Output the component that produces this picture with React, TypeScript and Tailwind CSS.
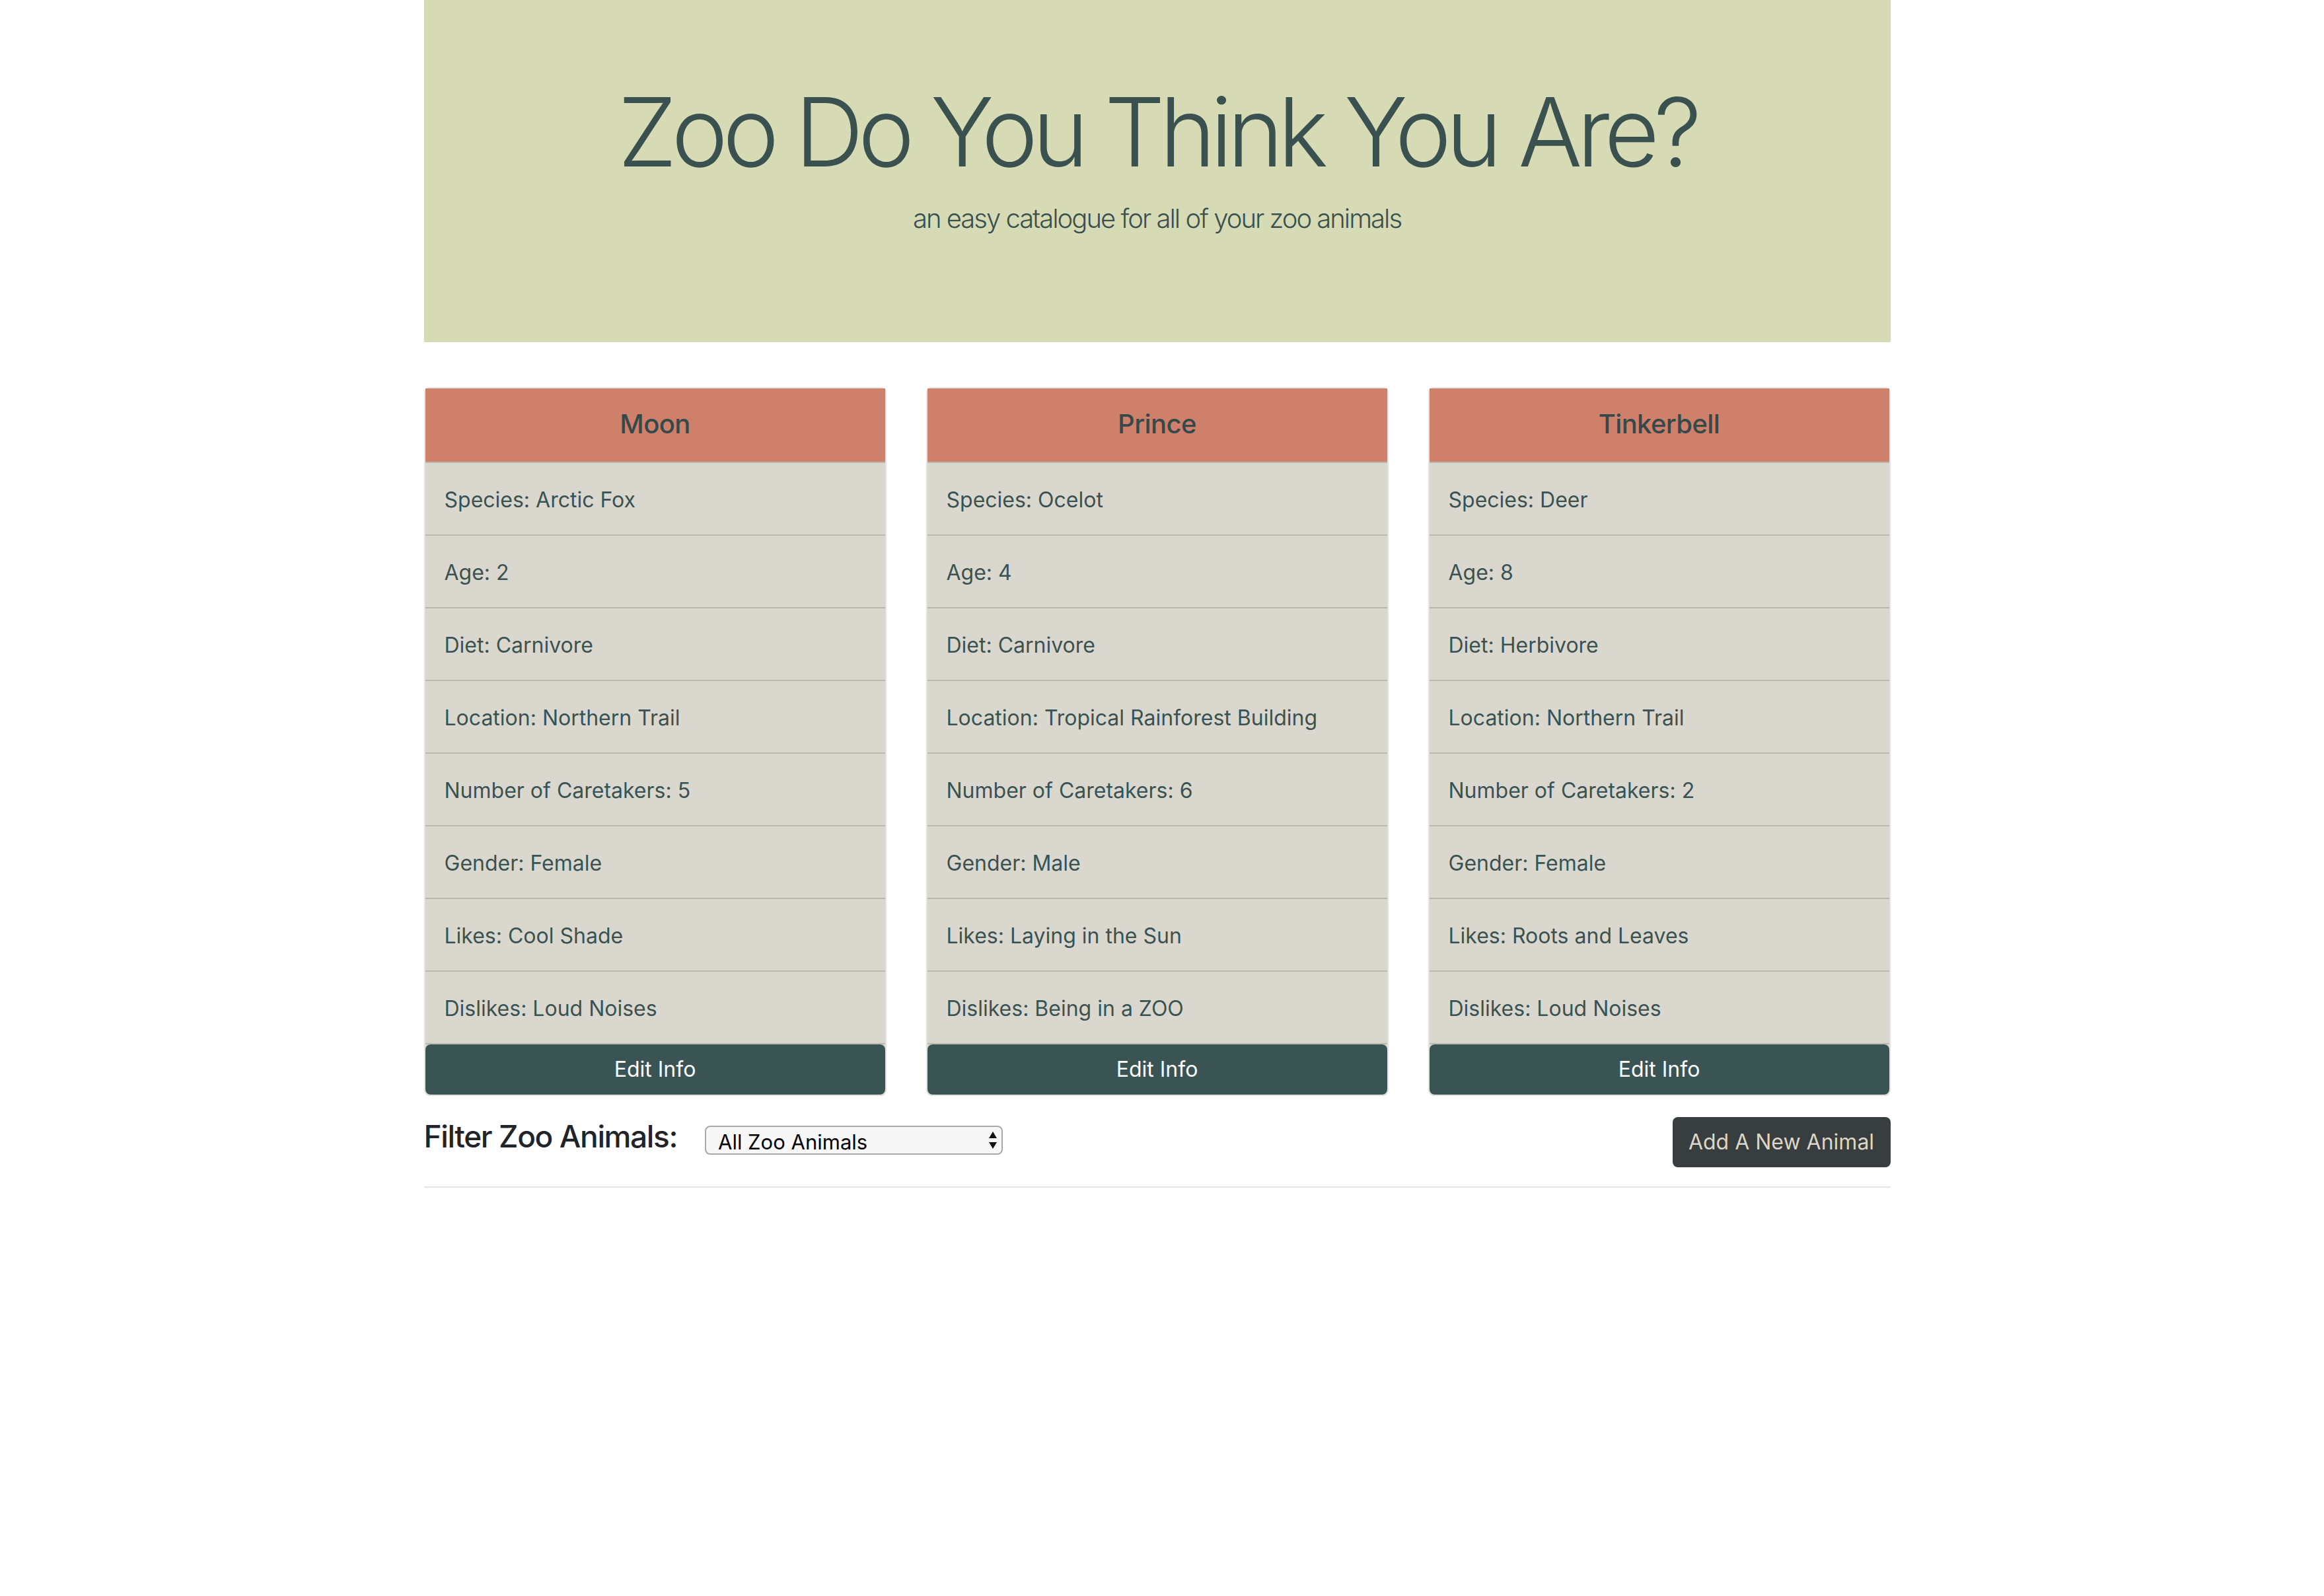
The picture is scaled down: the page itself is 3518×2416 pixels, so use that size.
import React from 'react';

type Animal = {
  name: string;
  species: string;
  age: number;
  diet: string;
  location: string;
  caretakers: number;
  gender: string;
  likes: string;
  dislikes: string;
};

const animals: Animal[] = [
  {
    name: 'Moon',
    species: 'Arctic Fox',
    age: 2,
    diet: 'Carnivore',
    location: 'Northern Trail',
    caretakers: 5,
    gender: 'Female',
    likes: 'Cool Shade',
    dislikes: 'Loud Noises',
  },
  {
    name: 'Prince',
    species: 'Ocelot',
    age: 4,
    diet: 'Carnivore',
    location: 'Tropical Rainforest Building',
    caretakers: 6,
    gender: 'Male',
    likes: 'Laying in the Sun',
    dislikes: 'Being in a ZOO',
  },
  {
    name: 'Tinkerbell',
    species: 'Deer',
    age: 8,
    diet: 'Herbivore',
    location: 'Northern Trail',
    caretakers: 2,
    gender: 'Female',
    likes: 'Roots and Leaves',
    dislikes: 'Loud Noises',
  },
];

function AnimalCard({ animal }: { animal: Animal }) {
  const rows = [
    `Species: ${animal.species}`,
    `Age: ${animal.age}`,
    `Diet: ${animal.diet}`,
    `Location: ${animal.location}`,
    `Number of Caretakers: ${animal.caretakers}`,
    `Gender: ${animal.gender}`,
    `Likes: ${animal.likes}`,
    `Dislikes: ${animal.dislikes}`,
  ];
  return (
    <div className="rounded-[8px] border-2 border-[#e2e2e2] bg-[#dad7cf]">
      <div className="flex h-[113px] items-center justify-center border-b-2 border-[#bcb9b1] bg-[#cf806b] pb-[4px]">
        <h5 className="text-[40px] font-medium tracking-[-0.015em] text-[#36494a]">{animal.name}</h5>
      </div>
      <ul>
        {rows.map((row) => (
          <li
            key={row}
            className="flex h-[110px] items-center border-b-2 border-[#bcb9b1] px-[29px] pt-[4px] text-[32px] text-[#3a5352]"
          >
            {row}
          </li>
        ))}
      </ul>
      <button className="h-[76px] w-full rounded-[8px] bg-[#3a5453] text-[32px] text-white">
        Edit Info
      </button>
    </div>
  );
}

export default function App() {
  return (
    <div className="min-h-screen bg-white font-['Inter',sans-serif]">
      <div className="w-[3503px]">
        <div className="mx-auto w-[2220px]">
          <header className="h-[518px] bg-[#d7dbb5] pt-[113px] text-center text-[#3a5150]">
            <h1 className="text-[144px] font-light leading-[173px] tracking-[-0.056em]">
              Zoo Do You Think You Are?
            </h1>
            <p className="mt-[15px] text-[40px] font-light leading-[60px] tracking-[-0.05em]">
              an easy catalogue for all of your zoo animals
            </p>
          </header>

          <div className="mt-[68px] grid grid-cols-3 gap-[60px]">
            {animals.map((a) => (
              <AnimalCard key={a.name} animal={a} />
            ))}
          </div>

          <div className="mt-[32px] flex items-start justify-between">
            <div className="flex items-start">
              <h4 className="text-[46px] font-medium leading-[58px] tracking-[-0.03em] text-[#212529]">
                Filter Zoo Animals:
              </h4>
              <div className="relative ml-[42px] mt-[13px] h-[44px] w-[451px]">
                <select className="h-full w-full appearance-none rounded-[8px] border-2 border-[#a9a9a9] bg-[#f7f7f7] pl-[18px] text-[31px] text-black">
                  <option>All Zoo Animals</option>
                  <option>Young Animals</option>
                  <option>Mature Animals</option>
                </select>
                <svg
                  className="pointer-events-none absolute right-[8px] top-[8px]"
                  width="14"
                  height="28"
                  viewBox="0 0 14 28"
                >
                  <path d="M7 1 L13 11 L1 11 Z" fill="#111" />
                  <path d="M1 17 L13 17 L7 27 Z" fill="#111" />
                </svg>
              </div>
            </div>
            <button className="h-[76px] w-[330px] rounded-[8px] bg-[#383d40] text-[32px] text-[#dcd6c8]">
              Add A New Animal
            </button>
          </div>

          <hr className="mt-[29px] border-t-2 border-[#e6e6e6]" />
        </div>
      </div>
    </div>
  );
}
